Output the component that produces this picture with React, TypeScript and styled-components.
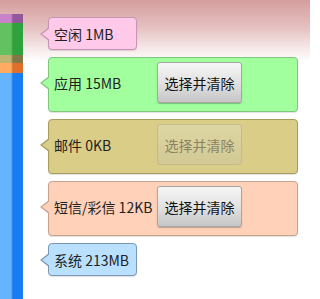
import React from 'react';
import styled, { createGlobalStyle } from 'styled-components';

const GlobalStyle = createGlobalStyle`
  html, body {
    margin: 0;
    padding: 0;
  }
  body {
    width: 310px;
    height: 299px;
    overflow: hidden;
    font-family: "Noto Sans CJK SC", "Noto Sans", sans-serif;
  }
`;

const Screen = styled.div`
  display: flex;
  width: 310px;
  height: 299px;
  background: linear-gradient(
    to bottom,
    #d59d9d 0px,
    #e6c2c2 28px,
    #f6e8e8 48px,
    #ffffff 62px
  );
`;

const UsageBar = styled.div`
  display: flex;
  flex-direction: column;
  width: 23px;
  margin-top: 14px;
`;

const Segment = styled.div<{ $light: string; $dark: string; $h?: number }>`
  height: ${(p) => (p.$h ? `${p.$h}px` : 'auto')};
  flex: ${(p) => (p.$h ? '0 0 auto' : '1 1 auto')};
  background: linear-gradient(
    to right,
    ${(p) => p.$light} 0%,
    ${(p) => p.$light} 48%,
    ${(p) => p.$dark} 56%,
    ${(p) => p.$dark} 100%
  );
`;

const List = styled.div`
  display: flex;
  flex-direction: column;
  gap: 7px;
  padding: 17px 0 0 25px;
  width: 250px;
`;

const Bubble = styled.div<{ $fill: string; $line: string; $wide?: boolean }>`
  position: relative;
  box-sizing: border-box;
  display: flex;
  align-items: center;
  width: ${(p) => (p.$wide ? '250px' : '89px')};
  height: ${(p) => (p.$wide ? '55px' : '33px')};
  padding: ${(p) => (p.$wide ? '5px 0 9px 5px' : '0 0 0 5px')};
  background: ${(p) => p.$fill};
  border: 1px solid ${(p) => p.$line};
  border-radius: 4px;
  box-shadow: 0 1px 1px rgba(0, 0, 0, 0.12);

  &::before,
  &::after {
    content: '';
    position: absolute;
    top: 50%;
    width: 0;
    height: 0;
    border-style: solid;
    border-color: transparent;
  }
  &::before {
    left: -9px;
    margin-top: -7px;
    border-width: 7px 9px 7px 0;
    border-right-color: ${(p) => p.$line};
  }
  &::after {
    left: -7px;
    margin-top: -6px;
    border-width: 6px 8px 6px 0;
    border-right-color: ${(p) => p.$fill};
  }
  ${(p) => (p.$wide ? '&::before, &::after { transform: translateY(-2px); }' : '')}
`;

const Label = styled.span<{ $fixed?: boolean }>`
  display: inline-block;
  width: ${(p) => (p.$fixed ? '103px' : 'auto')};
  font-size: 14px;
  line-height: 18px;
  color: #222;
  white-space: nowrap;
`;

const ClearButton = styled.button<{ $disabled?: boolean }>`
  box-sizing: border-box;
  width: 85px;
  height: 41px;
  padding: 0;
  font-family: "Noto Sans CJK SC", "Noto Sans", sans-serif;
  font-size: 14px;
  color: ${(p) => (p.$disabled ? '#8c8361' : '#111')};
  background: ${(p) =>
    p.$disabled
      ? 'linear-gradient(to bottom, #ddd6a4, #d2c994)'
      : 'linear-gradient(to bottom, #f6f6f6 0%, #e2e2e2 50%, #c6c6c6 100%)'};
  border: 1px solid ${(p) => (p.$disabled ? '#c4bb86' : '#a6a6a6')};
  border-radius: 3px;
  box-shadow: ${(p) => (p.$disabled ? 'none' : '0 1px 1px rgba(0,0,0,0.25)')};
  cursor: ${(p) => (p.$disabled ? 'default' : 'pointer')};
`;

const segments = [
  { light: '#c982c9', dark: '#93579d', h: 9 },
  { light: '#62c262', dark: '#2fa23d', h: 32 },
  { light: '#bfb36f', dark: '#827846', h: 8 },
  { light: '#ffab62', dark: '#e06f2c', h: 10 },
  { light: '#65b4ff', dark: '#197cf2' },
];

const items = [
  { text: '空闲 1MB', fill: '#ffc9e9', line: '#c595b3' },
  { text: '应用 15MB', fill: '#a2ff9e', line: '#7fc67c', button: true },
  { text: '邮件 0KB', fill: '#d9cd88', line: '#a99b5c', button: true, disabled: true },
  { text: '短信/彩信 12KB', fill: '#ffd1b8', line: '#c7a28f', button: true },
  { text: '系统 213MB', fill: '#b9e0ff', line: '#7b99b6' },
];

export default function App() {
  return (
    <>
      <GlobalStyle />
      <Screen>
        <UsageBar>
          {segments.map((s, i) => (
            <Segment key={i} $light={s.light} $dark={s.dark} $h={s.h} />
          ))}
        </UsageBar>
        <List>
          {items.map((it) => (
            <Bubble key={it.text} $fill={it.fill} $line={it.line} $wide={it.button}>
              <Label $fixed={it.button}>{it.text}</Label>
              {it.button && (
                <ClearButton $disabled={it.disabled} disabled={it.disabled}>
                  选择并清除
                </ClearButton>
              )}
            </Bubble>
          ))}
        </List>
      </Screen>
    </>
  );
}
